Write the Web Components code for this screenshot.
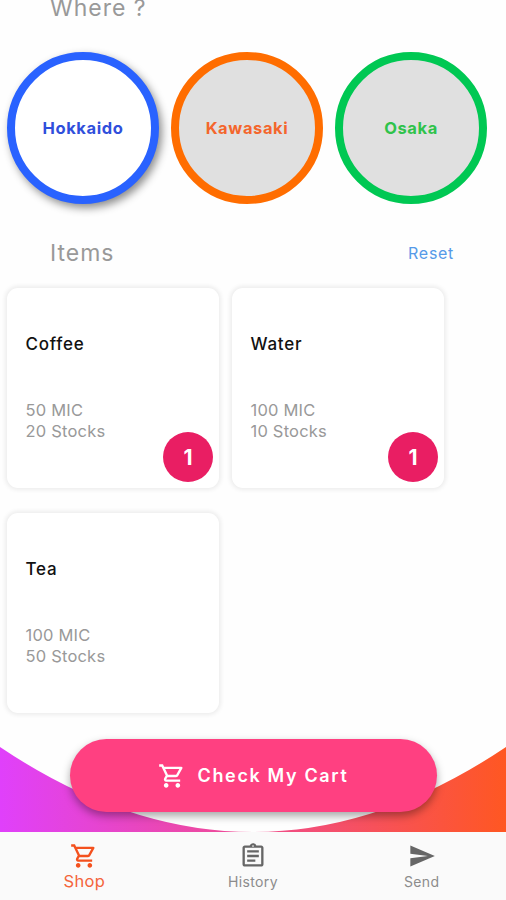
<!DOCTYPE html>
<html lang="en">
<head>
<meta charset="utf-8">
<title>Shop</title>
<style>
html,body{margin:0;height:100%;overflow:hidden;background:#fefefe;font-family:Inter,"Liberation Sans",sans-serif}
</style>
</head>
<body>
<shop-app></shop-app>
<script>
const define = (name, html) => {
  const t = document.createElement('template');
  t.innerHTML = html;
  customElements.define(name, class extends HTMLElement {
    constructor() {
      super();
      this.attachShadow({mode: 'open'}).append(t.content.cloneNode(true));
    }
  });
};

const ICONS = {
  cart: 'M15.55 13c.75 0 1.41-.41 1.75-1.03l3.58-6.49A.996.996 0 0 0 20.01 4H5.21l-.94-2H1v2h2l3.6 7.59-1.35 2.44C4.52 15.37 5.48 17 7 17h12v-2H7l1.1-2h7.45zM6.16 6h12.15l-2.76 5H8.53L6.16 6zM7 18c-1.1 0-1.99.9-1.99 2S5.9 22 7 22s2-.9 2-2-.9-2-2-2zm10 0c-1.1 0-1.99.9-1.99 2s.89 2 1.99 2 2-.9 2-2-.9-2-2-2z',
  clipboard: 'M7 15h7v2H7zm0-4h10v2H7zm0-4h10v2H7zm12-4h-4.18C14.4 1.84 13.3 1 12 1c-1.3 0-2.4.84-2.82 2H5c-1.1 0-2 .9-2 2v14c0 1.1.9 2 2 2h14c1.1 0 2-.9 2-2V5c0-1.1-.9-2-2-2zm-7-.25c.41 0 .75.34.75.75s-.34.75-.75.75-.75-.34-.75-.75.34-.75.75-.75zM19 19H5V5h14v14z',
  send: 'M2.01 21L23 12 2.01 3 2 10l15 2-15 2z'
};
customElements.define('app-icon', class extends HTMLElement {
  connectedCallback() {
    if (this.shadowRoot) return;
    this.attachShadow({mode: 'open'}).innerHTML = `<style>:host{display:block;flex:none;width:var(--size,28px);height:var(--size,28px)}svg{display:block;width:100%;height:100%}</style>
      <svg viewBox="0 0 24 24" fill="currentColor"><path d="${ICONS[this.getAttribute('name')]}"/></svg>`;
  }
});

define('section-title', `<style>
:host{display:flex;justify-content:space-between;align-items:center;height:30px;padding:0 52px 0 50px;font-size:23px;letter-spacing:1px;color:#999}
::slotted(a){font-size:16px;letter-spacing:.7px;color:#559ae8}
</style><span><slot></slot></span><slot name="action"></slot>`);

define('place-circle', `<style>
:host{box-sizing:border-box;display:flex;align-items:center;justify-content:center;width:152px;height:152px;padding-bottom:1px;border-radius:50%;border:8.5px solid var(--ring);background:#e0e0e0;color:var(--label);font-size:16.5px;font-weight:650;letter-spacing:.6px}
:host([selected]){background:#fff;box-shadow:3px 4px 8px rgba(0,0,0,.45)}
</style><slot></slot>`);

define('count-badge', `<style>
:host{display:flex;align-items:center;justify-content:center;width:50px;height:50px;border-radius:50%;background:#e91e63;color:#fff;font-size:21px;font-weight:700}
</style><slot></slot>`);

define('item-card', `<style>
:host{position:relative;box-sizing:border-box;display:flex;flex-direction:column;width:212px;height:200px;padding:44px 18.5px 0;border-radius:11px;background:#fff;box-shadow:0 0 4px 2px rgba(0,0,0,.07)}
.name{font-size:17px;line-height:24px;font-weight:500;letter-spacing:.75px;color:#111}
.meta{margin-top:44px;font-size:16.5px;line-height:21px;letter-spacing:.2px;color:#999}
.meta ::slotted(*){display:block}
::slotted(count-badge){position:absolute;right:6px;bottom:6px}
</style><div class="name"><slot name="name"></slot></div><div class="meta"><slot></slot></div><slot name="badge"></slot>`);

define('cart-button', `<style>
:host{box-sizing:border-box;display:flex;align-items:center;justify-content:center;gap:12px;width:367px;height:73px;border-radius:37px;background:#ff4081;color:#fff;font-size:18px;font-weight:600;letter-spacing:1.65px;box-shadow:0 4px 8px rgba(0,0,0,.35)}
</style><app-icon name="cart"></app-icon><span><slot></slot></span>`);

define('wave-footer', `<style>
:host{display:grid;height:93px;margin-top:auto;justify-items:center}
svg,::slotted(*){grid-area:1/1}
svg{display:block;width:100%;height:85px;align-self:end}
</style>
<svg viewBox="0 0 506 85" preserveAspectRatio="none"><defs><linearGradient id="g"><stop offset="0" stop-color="#e040fb"/><stop offset="1" stop-color="#ff5722"/></linearGradient></defs><path d="M0 0Q253 170 506 0V85H0Z" fill="url(#g)"/></svg><slot></slot>`);

define('nav-tab', `<style>
:host{display:flex;flex-direction:column;align-items:center;flex:1;padding-top:10px;color:#666;font-size:14px;letter-spacing:.35px}
span{color:#8c8c8c;line-height:20px;margin-top:2px}
:host([active]){color:#f4511e;font-size:16.5px}
:host([active]) span{color:#f4653c;margin-top:1px}
</style><slot name="icon"></slot><span><slot></slot></span>`);

define('nav-bar', `<style>:host{display:flex;height:68px;background:#fafafa}</style><slot></slot>`);

define('shop-app', `<style>
:host{display:flex;flex-direction:column;width:506px;height:900px;overflow:hidden}
.where{margin-top:-7px}
.places{display:flex;gap:12px;margin:29px 0 0 7px}
.items{margin-top:34px}
.grid{display:grid;grid-template-columns:212px 212px;gap:25px 13px;margin:20px 0 0 7px}
</style>
<section-title class="where">Where ?</section-title>
<div class="places">
<place-circle selected style="--ring:#2962ff;--label:#304fdc">Hokkaido</place-circle>
<place-circle style="--ring:#ff6d00;--label:#f4662c">Kawasaki</place-circle>
<place-circle style="--ring:#00c853;--label:#2fc34b">Osaka</place-circle>
</div>
<section-title class="items">Items<a slot="action">Reset</a></section-title>
<div class="grid">
<item-card><span slot="name">Coffee</span><span>50 MIC</span><span>20 Stocks</span><count-badge slot="badge">1</count-badge></item-card>
<item-card><span slot="name">Water</span><span>100 MIC</span><span>10 Stocks</span><count-badge slot="badge">1</count-badge></item-card>
<item-card><span slot="name">Tea</span><span>100 MIC</span><span>50 Stocks</span></item-card>
</div>
<wave-footer><cart-button>Check My Cart</cart-button></wave-footer>
<nav-bar>
<nav-tab active><app-icon slot="icon" name="cart"></app-icon>Shop</nav-tab>
<nav-tab><app-icon slot="icon" name="clipboard"></app-icon>History</nav-tab>
<nav-tab><app-icon slot="icon" name="send"></app-icon>Send</nav-tab>
</nav-bar>`);
</script>
</body>
</html>
